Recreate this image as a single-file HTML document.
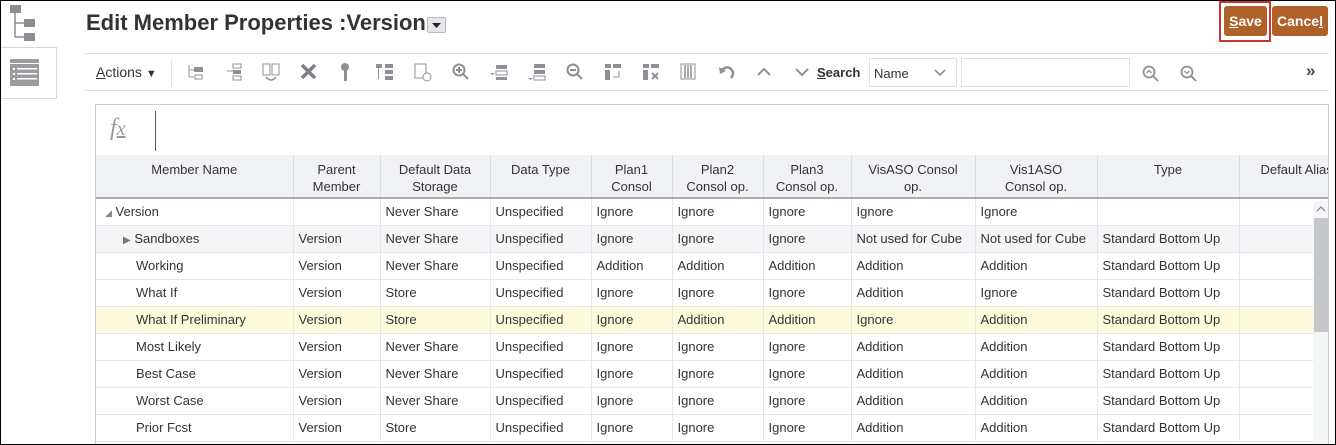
<!DOCTYPE html>
<html><head><meta charset="utf-8"><style>
*{box-sizing:border-box;margin:0;padding:0}
body{width:1336px;height:445px;overflow:hidden;background:#fff;font-family:"Liberation Sans",Arial,sans-serif;color:#333;position:relative}
.frame{position:absolute;left:0;top:0;width:1336px;height:445px;border:1px solid #000;pointer-events:none;z-index:10}
.abs{position:absolute}
.title{left:86px;top:10px;font-size:22px;font-weight:bold;color:#333}
.dd{left:427px;top:17px;width:19px;height:16px;background:#e4e6ea;border:1px solid #b8bcc2;border-radius:2px}
.btn{top:6px;height:30px;background:#b0612a;color:#fff;font-weight:bold;font-size:14px;border-radius:3px;text-align:center;line-height:30px}
.tb{left:85px;top:53px;width:1244px;height:38px;border-top:1px solid #dfe1e4;border-bottom:1px solid #dfe1e4}
.grid{left:95px;top:104px;width:1234px;height:341px;border:1px solid #c9ccd1;border-bottom:none;overflow:hidden}
table{border-collapse:collapse;position:absolute;left:0;top:50px;font-size:13px;table-layout:fixed;width:1233px}
th{background:#f1f2f5;font-weight:normal;height:43px;vertical-align:top;padding-top:6px;text-align:center;border-right:1px solid #dcdee2;border-bottom:2px solid #a9acb1;line-height:17px;color:#333;white-space:nowrap;overflow:hidden}
td{height:27px;padding-left:5px;border-right:1px solid #e4e6ea;border-bottom:1px solid #e4e6ea;white-space:nowrap;overflow:hidden;color:#333}
tr.g td{background:#f4f5f7}
tr.y td{background:#fdfbdc}
</style></head><body>
<div class="frame"></div>
<svg class="abs" style="left:8px;top:5px" width="32" height="38"><rect x="2" y="0" width="11" height="8" fill="#8a8d91"/><path d="M7 8V32M7 18H16M7 32H16" stroke="#8a8d91" stroke-width="1.5" fill="none"/><rect x="16" y="14" width="11" height="8" fill="#8a8d91"/><rect x="16" y="28" width="11" height="8" fill="#8a8d91"/></svg>
<div class="abs" style="left:0;top:47px;width:57px;height:52px;border:1px solid #d4d6da;border-left:none"></div>
<svg class="abs" style="left:10px;top:59px" width="30" height="28"><rect width="29" height="27" rx="1" fill="#9a9ca0"/><rect x="0" y="4" width="29" height="1" fill="#fff"/><g fill="#fff"><rect x="3" y="9" width="2" height="2"/><rect x="7" y="9" width="20" height="1.5"/><rect x="3" y="14" width="2" height="2"/><rect x="7" y="14" width="20" height="1.5"/><rect x="3" y="19" width="2" height="2"/><rect x="7" y="19" width="20" height="1.5"/></g></svg>
<div class="abs title">Edit Member Properties :Version</div>
<div class="abs dd"><svg width="17" height="14"><path d="M4 5H13L8.5 10Z" fill="#222"/></svg></div>
<div class="abs" style="left:1219px;top:1px;width:52px;height:41px;border:2px solid #c9352f"></div>
<div class="abs btn" style="left:1224px;width:43px"><u>S</u>ave</div>
<div class="abs btn" style="left:1272px;width:56px">Cance<u>l</u></div>
<div class="abs tb">
<div class="abs" style="left:11px;top:10px;font-size:14px"><u>A</u>ctions <span style="font-size:11px">▼</span></div>
<div class="abs" style="left:86px;top:6px;width:1px;height:26px;background:#dcdee2"></div>
<svg class="abs" style="left:100px;top:8px" width="640" height="22" fill="#8d9095" stroke="#8d9095">
<g stroke-width="1"><path d="M4 3V15M4 8H9M4 15H9" fill="none"/><rect x="9" y="5" width="9" height="5" stroke="none"/><rect x="10" y="13" width="7" height="4" fill="none"/></g>
<g transform="translate(38,0)"><path d="M4 9H10" fill="none"/><rect x="10" y="2" width="8" height="4" fill="none"/><rect x="10" y="8" width="8" height="4" stroke="none"/><rect x="10" y="14" width="8" height="4" fill="none"/></g>
<g transform="translate(76,0)"><rect x="2" y="2" width="7" height="11" fill="none"/><rect x="11" y="2" width="7" height="11" fill="none"/><path d="M5 15Q10 21 15 15" fill="none" stroke-width="1.5"/></g>
<g transform="translate(114,0)" stroke-width="3.5" stroke="#7d8085"><path d="M3 3L16 16M16 3L3 16"/></g>
<g transform="translate(152,0)" stroke="none"><circle cx="8" cy="5" r="4"/><rect x="7" y="8" width="3" height="11"/></g>
<g transform="translate(190,0)" stroke="none"><rect x="1" y="2" width="6" height="4"/><rect x="10" y="2" width="8" height="4"/><rect x="10" y="8" width="8" height="4"/><rect x="10" y="14" width="8" height="4"/><rect x="3" y="6" width="1" height="11"/></g>
<g transform="translate(228,0)"><rect x="2" y="2" width="11" height="14" fill="none"/><circle cx="14" cy="15" r="4" fill="#fff"/></g>
<g transform="translate(266,0)" stroke-width="2"><circle cx="8" cy="8" r="5.5" fill="none"/><path d="M12 12L17 17M8 5V11M5 8H11"/></g>
<g transform="translate(304,0)" stroke="none"><rect x="7" y="3" width="11" height="4"/><rect x="7" y="9" width="11" height="4" fill="none" stroke="#8d9095"/><rect x="7" y="15" width="11" height="3"/><path d="M1 11H6L3.5 13Z"/></g>
<g transform="translate(342,0)" stroke="none"><rect x="7" y="2" width="11" height="4"/><rect x="7" y="8" width="11" height="4"/><rect x="7" y="14" width="11" height="4" fill="none" stroke="#8d9095"/><path d="M1 16H6L3.5 18Z"/></g>
<g transform="translate(380,0)" stroke-width="2"><circle cx="8" cy="8" r="5.5" fill="none"/><path d="M12 12L17 17M5 8H11"/></g>
<g transform="translate(418,0)" stroke="none"><rect x="2" y="2" width="6" height="4"/><rect x="10" y="2" width="8" height="4"/><rect x="2" y="8" width="5" height="10"/><path d="M16 9V15H10" fill="none" stroke="#8d9095"/></g>
<g transform="translate(456,0)" stroke="none"><rect x="2" y="2" width="6" height="4"/><rect x="10" y="2" width="8" height="4"/><rect x="2" y="8" width="5" height="10"/><path d="M11 11L17 17M17 11L11 17" stroke="#8d9095" stroke-width="2"/></g>
<g transform="translate(494,0)"><rect x="2" y="2" width="14" height="15" fill="none"/><path d="M6 3V16M9 3V16M12 3V16" stroke-width="1.5"/></g>
<g transform="translate(532,0)" stroke-width="2.5"><path d="M5 8Q12 2 16 10Q16 14 14 16" fill="none"/><path d="M2 5L3 12L9 9Z" stroke="none"/></g>
<g transform="translate(570,0)" stroke-width="2" fill="none"><path d="M3 13L9 7L15 13"/></g>
<g transform="translate(608,0)" stroke-width="2" fill="none"><path d="M3 7L9 13L15 7"/></g>
</svg>
<div class="abs" style="left:732px;top:11px;font-size:13px;font-weight:bold"><u>S</u>earch</div>
<div class="abs" style="left:784px;top:4px;width:88px;height:29px;border:1px solid #dfe1e4;font-size:13px;padding:7px 0 0 4px">Name<svg class="abs" style="left:64px;top:10px" width="12" height="8"><path d="M1 1L6 6L11 1" stroke="#777" fill="none" stroke-width="1.3"/></svg></div>
<div class="abs" style="left:876px;top:4px;width:169px;height:29px;border:1px solid #dfe1e4"></div>
<svg class="abs" style="left:1056px;top:10px" width="120" height="20" stroke="#8d9095" fill="none" stroke-width="1.8"><circle cx="8" cy="8" r="5.5"/><path d="M12 12L17 17"/><path d="M5.5 9L8 6.5L10.5 9" stroke-width="1.3"/><g transform="translate(38,0)"><circle cx="8" cy="8" r="5.5"/><path d="M12 12L17 17"/><path d="M5.5 7L8 9.5L10.5 7" stroke-width="1.3"/></g></svg>
<div class="abs" style="left:1221px;top:7px;font-size:17px;font-weight:bold;color:#444">»</div>
</div>
<div class="abs grid">
<div class="abs" style="left:14px;top:10px;font-family:'Liberation Serif',serif;font-style:italic;font-size:24px;color:#999">f<span style="font-size:20px;text-decoration:underline">x</span></div>
<div class="abs" style="left:59px;top:6px;width:1px;height:40px;background:#555"></div>
<table>
<colgroup><col style="width:197px"><col style="width:87px"><col style="width:110px"><col style="width:101px"><col style="width:81px"><col style="width:91px"><col style="width:88px"><col style="width:124px"><col style="width:122px"><col style="width:142px"><col style="width:90px"></colgroup>
<tr><th>Member Name</th><th>Parent<br>Member</th><th>Default Data<br>Storage</th><th>Data Type</th><th>Plan1<br>Consol</th><th>Plan2<br>Consol op.</th><th>Plan3<br>Consol op.</th><th>VisASO Consol<br>op.</th><th>Vis1ASO<br>Consol op.</th><th>Type</th><th style="text-align:left;padding-left:21px">Default Alias</th></tr>
<tr><td style="padding-left:9px"><span style="font-size:9px;color:#888">◢</span> Version</td><td></td><td>Never Share</td><td>Unspecified</td><td>Ignore</td><td>Ignore</td><td>Ignore</td><td>Ignore</td><td>Ignore</td><td></td><td></td></tr>
<tr class="g"><td style="padding-left:27px"><span style="font-size:10px;color:#777">▶</span> Sandboxes</td><td>Version</td><td>Never Share</td><td>Unspecified</td><td>Ignore</td><td>Ignore</td><td>Ignore</td><td>Not used for Cube</td><td>Not used for Cube</td><td>Standard Bottom Up</td><td></td></tr>
<tr><td style="padding-left:40px">Working</td><td>Version</td><td>Never Share</td><td>Unspecified</td><td>Addition</td><td>Addition</td><td>Addition</td><td>Addition</td><td>Addition</td><td>Standard Bottom Up</td><td></td></tr>
<tr><td style="padding-left:40px">What If</td><td>Version</td><td>Store</td><td>Unspecified</td><td>Ignore</td><td>Ignore</td><td>Ignore</td><td>Addition</td><td>Ignore</td><td>Standard Bottom Up</td><td></td></tr>
<tr class="y"><td style="padding-left:40px">What If Preliminary</td><td>Version</td><td>Store</td><td>Unspecified</td><td>Ignore</td><td>Addition</td><td>Addition</td><td>Ignore</td><td>Addition</td><td>Standard Bottom Up</td><td></td></tr>
<tr><td style="padding-left:40px">Most Likely</td><td>Version</td><td>Never Share</td><td>Unspecified</td><td>Ignore</td><td>Ignore</td><td>Ignore</td><td>Addition</td><td>Addition</td><td>Standard Bottom Up</td><td></td></tr>
<tr><td style="padding-left:40px">Best Case</td><td>Version</td><td>Never Share</td><td>Unspecified</td><td>Ignore</td><td>Ignore</td><td>Ignore</td><td>Addition</td><td>Addition</td><td>Standard Bottom Up</td><td></td></tr>
<tr><td style="padding-left:40px">Worst Case</td><td>Version</td><td>Never Share</td><td>Unspecified</td><td>Ignore</td><td>Ignore</td><td>Ignore</td><td>Addition</td><td>Addition</td><td>Standard Bottom Up</td><td></td></tr>
<tr><td style="padding-left:40px">Prior Fcst</td><td>Version</td><td>Store</td><td>Unspecified</td><td>Ignore</td><td>Ignore</td><td>Ignore</td><td>Addition</td><td>Addition</td><td>Standard Bottom Up</td><td></td></tr>
</table>
<div class="abs" style="left:1217px;top:96px;width:16px;height:245px;background:#f4f5f6"></div>
<div class="abs" style="left:1218px;top:113px;width:14px;height:114px;background:#c4c6c9"></div>
<svg class="abs" style="left:1220px;top:101px" width="10" height="6"><path d="M1 5L5 1L9 5" stroke="#777" fill="none"/></svg>
</div>
</body></html>
